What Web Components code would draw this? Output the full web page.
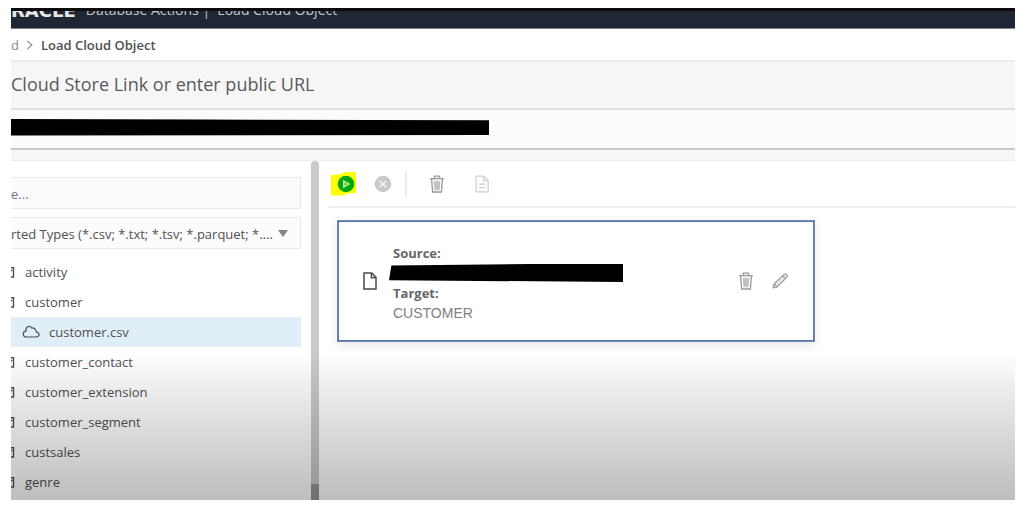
<!DOCTYPE html>
<html lang="en">
<head>
<meta charset="utf-8">
<title>Load Cloud Object</title>
<style>
  body { margin: 0; background: #fff; font-family: "Open Sans", "Noto Sans", sans-serif; font-size: 13px; color: #4a4a4a; }
</style>
</head>
<body>
<cloud-loader></cloud-loader>
<script>
const define = (name, html, setup) => {
  const template = document.createElement("template");
  template.innerHTML = html;
  customElements.define(name, class extends HTMLElement {
    constructor() {
      super();
      this.attachShadow({ mode: "open" }).append(template.content.cloneNode(true));
    }
    connectedCallback() { if (setup) setup(this, this.shadowRoot); }
  });
};

const shapes = {
  run: `<circle cx="9" cy="9" r="8.3" fill="#05a80c"/><path d="M6 4.8v8.4L13.4 9z" fill="#b4ef8c"/><path d="M7.8 7.6v2.800L10.200 9z" fill="#35b52f"/>`,
  stop: `<circle cx="9" cy="9" r="8.3" fill="#c9c9cb"/><path d="M5.7 5.7l6.6 6.6M12.3 5.7l-6.6 6.6" stroke="#f4f4f4" stroke-width="1.5"/>`,
  trash: `<path d="M5.500 5.500h7l-.8 10H6.300z" fill="#dedee0"/><g fill="none" stroke="currentColor" stroke-width="1.3"><path d="M2 3.6h14M6.4 3.4V1.2h5.2v2.2M3.6 4l1 13h8.8l1-13"/><path d="M6.9 6.5l.3 8M9 6.5v8M11.1 6.5l-.3 8" stroke-width=".8"/></g>`,
  report: `<g fill="none" stroke="currentColor" stroke-width="1.3"><path d="M3 1.2h7.8l4.4 4.4v11.2H3zM10.6 1.4v4.4h4.4"/><path d="M5.8 9.2h6.4M5.8 12.6h6.4"/></g>`,
  file: `<g fill="none" stroke="currentColor" stroke-width="1.5"><path d="M3 1h7.8L15 5.4V17H3z"/><path d="M10.4 1.4v4.4h4.4" /></g>`,
  pencil: `<g fill="#e6e6e6" stroke="currentColor" stroke-width="1.1" stroke-linejoin="round"><path d="M2 16l1-4L13 2.4q1.3-1.2 2.4-.1l.6.6q1 1.1-.2 2.4L6 15zM11.6 3.8l2.9 2.9"/><path d="M3 12l3 3"/></g>`,
  cloud: `<path d="M4.5 14h9.5c4 0 4-4.8.4-4.9C14 6 11.6 4.4 9.9 5.1 7.7 1.8 3.2 4 4.1 7.8 .2 8.5.2 14 4.5 14z" fill="none" stroke="currentColor" stroke-width="1.2"/>`,
  bucket: `<path d="M2 3.500h12.500M13.500 3v12.500H4V3M9 7h3" fill="none" stroke="currentColor" stroke-width="1.800"/>`,
  chevron: `<path d="M5 3l7 6-7 6" fill="none" stroke="currentColor" stroke-width="1.600"/>`
};

define("ui-icon", `
<style>
  :host { display: block; flex: none; width: 18px; height: 18px; }
  svg { display: block; width: 100%; height: 100%; }
</style>
<svg viewBox="0 0 18 18" aria-hidden="true"></svg>`,
(el, root) => { root.querySelector("svg").innerHTML = shapes[el.getAttribute("name")]; });

define("icon-button", `
<style>
  :host { display: block; flex: none; }
  button { display: block; margin: 0; padding: 0; border: 0; background: none; color: inherit; }
</style>
<button type="button"><slot></slot></button>`,
(el, root) => { root.querySelector("button").setAttribute("aria-label", el.getAttribute("label")); });

define("app-header", `
<style>
  :host { display: block; height: 21px; box-sizing: border-box; border-top: 3px solid #0c0c0d; border-bottom: 1px solid #7c838d; background: #1e2733; color: #c4c7cc; overflow: hidden; }
  div { display: flex; align-items: flex-end; gap: 10px; height: 10px; margin-top: -1px; font-size: 14px; line-height: 20px; white-space: nowrap; }
  b { font: bold 18px/18px "DejaVu Sans", sans-serif; color: #e8e8ea; }
</style>
<div><b>RACLE</b><span>Database Actions | &nbsp;Load Cloud Object</span></div>`);

define("bread-crumb", `
<style>
  :host { display: block; border-bottom: 2px solid #ebebeb; background: #fff; }
  nav { display: flex; align-items: center; gap: 5px; height: 31px; padding-top: 1px; box-sizing: border-box; }
  a { color: #8a8a8a; text-decoration: none; }
  ui-icon { width: 12px; height: 12px; color: #8a8a8a; }
  span { font-weight: 600; font-size: 13px; color: #505050; }
</style>
<nav aria-label="Breadcrumb"><a href="#">d</a><ui-icon name="chevron"></ui-icon><span aria-current="page">Load Cloud Object</span></nav>`);

define("store-link", `
<style>
  :host { display: block; border-bottom: 1px solid #ececee; background: #f7f7f8; }
  label { display: block; height: 46px; border-bottom: 2px solid #dfdfe0; background: #f6f6f6; font-size: 18px; line-height: 45px; color: #5a5a5a; white-space: nowrap; }
  .field { position: relative; border-bottom: 2px solid #c9c9c9; margin-bottom: 10px; background: #fbfbfd; }
  input { display: block; width: 100%; height: 38px; box-sizing: border-box; padding: 0; border: 0; background: none; font: inherit; }
  .mask { position: absolute; left: 0; top: 9px; width: 478px; height: 17px; background: #000; clip-path: polygon(0 0, 40% 3%, 100% 8%, 100% 94%, 0 97%); }
</style>
<label for="url">Cloud Store Link or enter public URL</label>
<div class="field"><input id="url" type="text"><div class="mask"></div></div>`);

define("tree-item", `
<style>
  :host { display: flex; align-items: center; gap: 8px; height: 30px; }
  :host([child]) { padding-left: 11px; gap: 9px; background: #e0eef8; }
  .clip { display: flex; justify-content: flex-end; width: 6px; overflow: hidden; }
  ui-icon { width: 14px; height: 14px; }
  :host([child]) .clip { width: 18px; }
  :host([child]) ui-icon { width: 18px; height: 18px; }
</style>
<span class="clip"></span><slot></slot>`,
(el, root) => {
  const icon = document.createElement("ui-icon");
  icon.setAttribute("name", el.hasAttribute("child") ? "cloud" : "bucket");
  root.querySelector(".clip").replaceChildren(icon);
});

define("file-browser", `
<style>
  :host { display: flex; flex-direction: column; gap: 8px; box-sizing: border-box; padding: 16px 10px 0 0; color: #505050; }
  input, select { display: block; width: 100%; height: 32px; box-sizing: border-box; margin: 0; border: 1px solid #e9e9ee; border-left: 0; padding: 2px 0 0; background: #fbfbfe; font: inherit; color: inherit; border-radius: 0; }
  input::placeholder { color: #777; opacity: 1; }
  select { appearance: none; padding-right: 22px; background: #fcfcfd; }
  .pick { position: relative; }
  .pick svg { position: absolute; right: 13px; top: 13px; width: 10px; height: 7px; }
</style>
<input type="text" aria-label="Search" placeholder="e...">
<div class="pick">
  <select aria-label="File types"><option>rted Types (*.csv; *.txt; *.tsv; *.parquet; *....</option></select>
  <svg viewBox="0 0 10 7" aria-hidden="true"><path d="M0 0h10L5 7z" fill="#858585"/></svg>
</div>
<div>
  <tree-item>activity</tree-item>
  <tree-item>customer</tree-item>
  <tree-item child>customer.csv</tree-item>
  <tree-item>customer_contact</tree-item>
  <tree-item>customer_extension</tree-item>
  <tree-item>customer_segment</tree-item>
  <tree-item>custsales</tree-item>
  <tree-item>genre</tree-item>
</div>`);

define("tool-bar", `
<style>
  :host { display: flex; align-items: center; height: 45px; margin-left: 10px; border-bottom: 2px solid #efefef; }
  .lit { background: #ff0; padding: 3px 1px 3px 6px; margin-left: 2px; clip-path: polygon(0 16%, 45% 10%, 50% 0, 100% 0, 100% 90%, 60% 92%, 55% 100%, 0 100%); }
  .stop { margin-left: 18px; }
  hr { width: 2px; height: 26px; margin: 0 21px 0 13px; border: 0; background: #ebebed; }
  .trash { color: #99999b; }
  .report { margin-left: 27px; color: #d0d0d2; }
</style>
<icon-button class="lit" label="Run"><ui-icon name="run"></ui-icon></icon-button>
<icon-button class="stop" label="Stop"><ui-icon name="stop"></ui-icon></icon-button>
<hr>
<icon-button class="trash" label="Delete"><ui-icon name="trash"></ui-icon></icon-button>
<icon-button class="report" label="Report"><ui-icon name="report"></ui-icon></icon-button>`);

define("load-card", `
<style>
  :host { display: flex; align-items: center; box-sizing: border-box; width: 478px; max-width: 100%; height: 122px; padding: 0 24px 0 22px; border: 2px solid #6f8bb3; background: #fff; box-shadow: 0 3px 10px #0000001a; outline: 1px dotted #45659a; outline-offset: -2px; }
  dl { flex: 1; margin: 0 0 0 14px; padding-top: 4px; font-size: 14px; line-height: 20px; }
  dt { font-weight: 700; font-size: 13px; color: #666; }
  dd { margin: 0; color: #808080; font-family: "Liberation Sans", sans-serif; }
  .mask { width: 234px; height: 18px; margin: 1px 0 1px -4px; background: #000; clip-path: polygon(1% 8%, 60% 0, 100% 0, 100% 100%, 0 90%); }
  .file { color: #4a4a4a; }
  .tools { display: flex; gap: 16px; color: #9a9a9a; }
</style>
<ui-icon class="file" name="file"></ui-icon>
<dl><dt>Source:</dt><dd><div class="mask"></div></dd><dt>Target:</dt><dd>CUSTOMER</dd></dl>
<div class="tools"><icon-button label="Delete"><ui-icon name="trash"></ui-icon></icon-button><icon-button label="Edit"><ui-icon name="pencil"></ui-icon></icon-button></div>`);

define("cloud-loader", `
<style>
  :host { display: flex; box-sizing: border-box; min-height: 100vh; padding: 8px 9px 12px 11px; }
  .frame { position: relative; flex: 1; min-width: 0; display: flex; flex-direction: column; overflow: hidden; background: #fff; }
  main { flex: 1; display: grid; grid-template-columns: 300px 8px minmax(0, 1fr); }
  .split { display: flex; align-items: flex-end; background: #c9c9c9; border-radius: 4px 4px 0 0; }
  .split i { flex: 1; height: 16px; background: #969696; }
  load-card { margin: 12px 0 0 18px; }
  .fade { position: absolute; left: 0; right: 0; bottom: 0; height: 146px; pointer-events: none; background: linear-gradient(#0000, #00000010 20%, #00000042); }
</style>
<div class="frame">
  <app-header></app-header>
  <bread-crumb></bread-crumb>
  <store-link></store-link>
  <main>
    <file-browser></file-browser>
    <div class="split"><i></i></div>
    <section><tool-bar></tool-bar><load-card></load-card></section>
  </main>
  <div class="fade"></div>
</div>`);
</script>
</body>
</html>
